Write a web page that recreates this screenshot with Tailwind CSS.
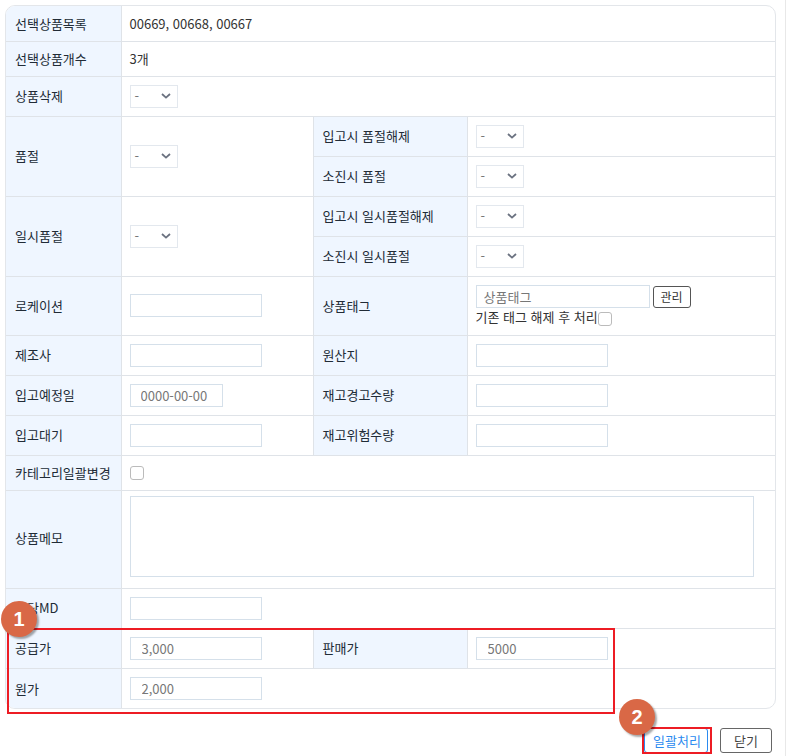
<!DOCTYPE html>
<html lang="ko">
  <head>
    <meta charset="UTF-8" />
    <title>상품 일괄처리</title>
    <script src="https://cdn.jsdelivr.net/npm/@tailwindcss/browser@4"></script>
  </head>

  <body class="bg-white font-['Noto_Sans_CJK_KR','Noto_Sans',sans-serif] text-[13px] text-[#212b36]">
    <div class="relative w-[787px] h-[756px] overflow-hidden">
      <div class="absolute top-0 bottom-0 left-[785px] w-px bg-[#e8e8e8]"></div>

      <!-- form table -->
      <div class="ml-[5px] mt-[5px] w-[771px] border border-[#e3e6ea] rounded-[10px] overflow-hidden">
        <table class="w-[769px] table-fixed border-collapse">
          <colgroup>
            <col class="w-[115px]" />
            <col class="w-[192px]" />
            <col class="w-[154px]" />
            <col />
          </colgroup>
          <tbody>
            <tr class="h-[35px] border-b border-[#dfe3e8]">
              <th class="bg-[#eff6ff] border-r border-[#dfe3e8] pl-[9px] text-left font-normal">선택상품목록</th>
              <td colspan="3" class="pl-[8px] text-[#333]">00669, 00668, 00667</td>
            </tr>
            <tr class="h-[35px] border-b border-[#dfe3e8]">
              <th class="bg-[#eff6ff] border-r border-[#dfe3e8] pl-[9px] text-left font-normal">선택상품개수</th>
              <td colspan="3" class="pl-[8px] text-[#333]">3개</td>
            </tr>
            <tr class="h-[40px] border-b border-[#dfe3e8]">
              <th class="bg-[#eff6ff] border-r border-[#dfe3e8] pl-[9px] text-left font-normal">상품삭제</th>
              <td colspan="3" class="pl-[8px]">
                <div class="w-[48px] h-[23px] border border-[#e3e8ee] flex items-center justify-between pl-[4px] pr-[6px] text-[#777]"><span>-</span><svg width="10" height="6" viewBox="0 0 10 6" fill="none" stroke="#6b7280" stroke-width="1.8"><path d="M1 1l4 3.6L9 1" /></svg></div>
              </td>
            </tr>
            <tr class="h-[40px] border-b border-[#dfe3e8]">
              <th rowspan="2" class="bg-[#eff6ff] border-r border-[#dfe3e8] pl-[9px] text-left font-normal">품절</th>
              <td rowspan="2" class="pl-[8px] border-r border-[#dfe3e8]">
                <div class="w-[48px] h-[23px] border border-[#e3e8ee] flex items-center justify-between pl-[4px] pr-[6px] text-[#777]"><span>-</span><svg width="10" height="6" viewBox="0 0 10 6" fill="none" stroke="#6b7280" stroke-width="1.8"><path d="M1 1l4 3.6L9 1" /></svg></div>
              </td>
              <th class="bg-[#eff6ff] border-r border-[#dfe3e8] pl-[9px] text-left font-normal">입고시 품절해제</th>
              <td class="pl-[8px]">
                <div class="w-[48px] h-[23px] border border-[#e3e8ee] flex items-center justify-between pl-[4px] pr-[6px] text-[#777]"><span>-</span><svg width="10" height="6" viewBox="0 0 10 6" fill="none" stroke="#6b7280" stroke-width="1.8"><path d="M1 1l4 3.6L9 1" /></svg></div>
              </td>
            </tr>
            <tr class="h-[40px] border-b border-[#dfe3e8]">
              <th class="bg-[#eff6ff] border-r border-[#dfe3e8] pl-[9px] text-left font-normal">소진시 품절</th>
              <td class="pl-[8px]">
                <div class="w-[48px] h-[23px] border border-[#e3e8ee] flex items-center justify-between pl-[4px] pr-[6px] text-[#777]"><span>-</span><svg width="10" height="6" viewBox="0 0 10 6" fill="none" stroke="#6b7280" stroke-width="1.8"><path d="M1 1l4 3.6L9 1" /></svg></div>
              </td>
            </tr>
            <tr class="h-[40px] border-b border-[#dfe3e8]">
              <th rowspan="2" class="bg-[#eff6ff] border-r border-[#dfe3e8] pl-[9px] text-left font-normal">일시품절</th>
              <td rowspan="2" class="pl-[8px] border-r border-[#dfe3e8]">
                <div class="w-[48px] h-[23px] border border-[#e3e8ee] flex items-center justify-between pl-[4px] pr-[6px] text-[#777]"><span>-</span><svg width="10" height="6" viewBox="0 0 10 6" fill="none" stroke="#6b7280" stroke-width="1.8"><path d="M1 1l4 3.6L9 1" /></svg></div>
              </td>
              <th class="bg-[#eff6ff] border-r border-[#dfe3e8] pl-[9px] text-left font-normal">입고시 일시품절해제</th>
              <td class="pl-[8px]">
                <div class="w-[48px] h-[23px] border border-[#e3e8ee] flex items-center justify-between pl-[4px] pr-[6px] text-[#777]"><span>-</span><svg width="10" height="6" viewBox="0 0 10 6" fill="none" stroke="#6b7280" stroke-width="1.8"><path d="M1 1l4 3.6L9 1" /></svg></div>
              </td>
            </tr>
            <tr class="h-[40px] border-b border-[#dfe3e8]">
              <th class="bg-[#eff6ff] border-r border-[#dfe3e8] pl-[9px] text-left font-normal">소진시 일시품절</th>
              <td class="pl-[8px]">
                <div class="w-[48px] h-[23px] border border-[#e3e8ee] flex items-center justify-between pl-[4px] pr-[6px] text-[#777]"><span>-</span><svg width="10" height="6" viewBox="0 0 10 6" fill="none" stroke="#6b7280" stroke-width="1.8"><path d="M1 1l4 3.6L9 1" /></svg></div>
              </td>
            </tr>
            <tr class="h-[59px] border-b border-[#dfe3e8]">
              <th class="bg-[#eff6ff] border-r border-[#dfe3e8] pl-[9px] text-left font-normal">로케이션</th>
              <td class="pl-[8px] border-r border-[#dfe3e8]"><input class="block w-[132px] h-[23px] border border-[#d5e0ea]" /></td>
              <th class="bg-[#eff6ff] border-r border-[#dfe3e8] pl-[9px] text-left font-normal">상품태그</th>
              <td class="pl-[8px]">
                <div class="flex items-center gap-[3px]">
                  <input placeholder="상품태그" class="block w-[174px] h-[23px] border border-[#d5e0ea] pl-[7px] placeholder:text-[#777]" />
                  <button class="w-[38px] h-[22px] border border-[#555] rounded-[3px] text-[12px] text-[#333]">관리</button>
                </div>
                <label class="flex items-center h-[18px] text-[#333]">기존 태그 해제 후 처리<span class="w-[14px] h-[14px] mt-[3px] border border-[#bbb] rounded-[3px] bg-white"></span></label>
              </td>
            </tr>
            <tr class="h-[40px] border-b border-[#dfe3e8]">
              <th class="bg-[#eff6ff] border-r border-[#dfe3e8] pl-[9px] text-left font-normal">제조사</th>
              <td class="pl-[8px] border-r border-[#dfe3e8]"><input class="block w-[132px] h-[23px] border border-[#d5e0ea]" /></td>
              <th class="bg-[#eff6ff] border-r border-[#dfe3e8] pl-[9px] text-left font-normal">원산지</th>
              <td class="pl-[8px]"><input class="block w-[132px] h-[23px] border border-[#d5e0ea]" /></td>
            </tr>
            <tr class="h-[40px] border-b border-[#dfe3e8]">
              <th class="bg-[#eff6ff] border-r border-[#dfe3e8] pl-[9px] text-left font-normal">입고예정일</th>
              <td class="pl-[8px] border-r border-[#dfe3e8]"><input placeholder="0000-00-00" class="block w-[93px] h-[23px] border border-[#d5e0ea] pl-[10px] placeholder:text-[#777]" /></td>
              <th class="bg-[#eff6ff] border-r border-[#dfe3e8] pl-[9px] text-left font-normal">재고경고수량</th>
              <td class="pl-[8px]"><input class="block w-[132px] h-[23px] border border-[#d5e0ea]" /></td>
            </tr>
            <tr class="h-[40px] border-b border-[#dfe3e8]">
              <th class="bg-[#eff6ff] border-r border-[#dfe3e8] pl-[9px] text-left font-normal">입고대기</th>
              <td class="pl-[8px] border-r border-[#dfe3e8]"><input class="block w-[132px] h-[23px] border border-[#d5e0ea]" /></td>
              <th class="bg-[#eff6ff] border-r border-[#dfe3e8] pl-[9px] text-left font-normal">재고위험수량</th>
              <td class="pl-[8px]"><input class="block w-[132px] h-[23px] border border-[#d5e0ea]" /></td>
            </tr>
            <tr class="h-[35px] border-b border-[#dfe3e8]">
              <th class="bg-[#eff6ff] border-r border-[#dfe3e8] pl-[9px] text-left font-normal">카테고리일괄변경</th>
              <td colspan="3" class="pl-[8px]"><span class="block w-[14px] h-[14px] border border-[#bbb] rounded-[3px]"></span></td>
            </tr>
            <tr class="h-[98px] border-b border-[#dfe3e8]">
              <th class="bg-[#eff6ff] border-r border-[#dfe3e8] pl-[9px] pb-[2px] text-left font-normal">상품메모</th>
              <td colspan="3" class="pl-[8px] pt-[5px] align-top"><div class="w-[624px] h-[81px] border border-[#d5e0ea]"></div></td>
            </tr>
            <tr class="h-[40px] border-b border-[#dfe3e8]">
              <th class="bg-[#eff6ff] border-r border-[#dfe3e8] pl-[9px] text-left font-normal">담당MD</th>
              <td colspan="3" class="pl-[8px]"><input class="block w-[132px] h-[23px] border border-[#d5e0ea]" /></td>
            </tr>
            <tr class="h-[40px] border-b border-[#dfe3e8]">
              <th class="bg-[#eff6ff] border-r border-[#dfe3e8] pl-[9px] text-left font-normal">공급가</th>
              <td class="pl-[8px] border-r border-[#dfe3e8]"><input value="3,000" class="block w-[132px] h-[23px] border border-[#d5e0ea] pl-[11px] text-[#777]" /></td>
              <th class="bg-[#eff6ff] border-r border-[#dfe3e8] pl-[9px] text-left font-normal">판매가</th>
              <td class="pl-[8px]"><input value="5000" class="block w-[132px] h-[23px] border border-[#d5e0ea] pl-[11px] text-[#777]" /></td>
            </tr>
            <tr class="h-[40px]">
              <th class="bg-[#eff6ff] border-r border-[#dfe3e8] pl-[9px] text-left font-normal">원가</th>
              <td colspan="3" class="pl-[8px]"><input value="2,000" class="block w-[132px] h-[23px] border border-[#d5e0ea] pl-[11px] text-[#777]" /></td>
            </tr>
          </tbody>
        </table>
      </div>

      <!-- buttons -->
      <div class="mt-[19px] mr-[15px] flex justify-end gap-[12px]">
        <button class="w-[64px] h-[25px] border border-[#2b8bf0] rounded-[3px] text-[#2b8bf0] pl-[2px]">일괄처리</button>
        <button class="w-[52px] h-[25px] border border-[#666] rounded-[3px] text-[#444]">닫기</button>
      </div>

      <!-- annotations -->
      <div class="absolute left-[7px] top-[628px] w-[608px] h-[86px] border-2 border-[#ed1c24]"></div>
      <div class="absolute left-[642px] top-[727px] w-[70px] h-[27px] border-2 border-[#ed1c24]"></div>
      <div class="absolute left-[1px] top-[601px] w-[36px] h-[36px] rounded-full bg-[#d96846] shadow-[2px_2px_2px_rgba(0,0,0,0.35)] flex items-center justify-center text-white text-[20px] font-bold font-['Liberation_Sans',sans-serif]">1</div>
      <div class="absolute left-[619px] top-[699px] w-[36px] h-[36px] rounded-full bg-[#d96846] shadow-[2px_2px_2px_rgba(0,0,0,0.35)] flex items-center justify-center text-white text-[20px] font-bold font-['Liberation_Sans',sans-serif]">2</div>
    </div>
  </body>
</html>
